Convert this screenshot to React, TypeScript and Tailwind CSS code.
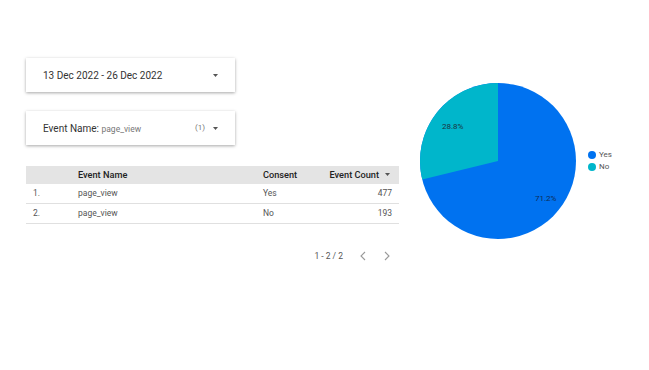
import React from "react";

const Caret = () => (
  <svg width="5" height="3" viewBox="0 0 5 3" className="inline-block">
    <path d="M0 0 L5 0 L2.5 3 Z" fill="#555" />
  </svg>
);

const Chevron = ({ dir }: { dir: "l" | "r" }) => (
  <svg width="6" height="10" viewBox="0 0 6 10">
    <path d={dir === "l" ? "M5 1 L1 5 L5 9" : "M1 1 L5 5 L1 9"} stroke="#9a9a9a" strokeWidth="1.1" fill="none" />
  </svg>
);

function Pie() {
  const cx = 80, cy = 80, r = 78;
  const a = 0.288 * 2 * Math.PI;
  const x = cx - r * Math.sin(a);
  const y = cy - r * Math.cos(a);
  return (
    <svg width="160" height="160" viewBox="0 0 160 160">
      <circle cx={cx} cy={cy} r={r} fill="#0072f0" />
      <path d={`M${cx} ${cy} L${cx} ${cy - r} A${r} ${r} 0 0 0 ${x} ${y} Z`} fill="#00b6cb" />
      <text x="24" y="48" fontSize="8" fill="#1b3340" fontFamily="Roboto">28.8%</text>
      <text x="117" y="120" fontSize="8" fill="#0d2b55" fontFamily="Roboto">71.2%</text>
    </svg>
  );
}

export default function App() {
  return (
    <div className="w-[649px] h-[370px] bg-white flex" style={{ fontFamily: "Roboto, 'Liberation Sans', sans-serif" }}>
      <div className="pl-[26px] pt-[58px] w-[400px] flex flex-col">
        <div className="w-[209px] h-[34px] bg-white shadow-[0_1px_3px_rgba(0,0,0,0.35)] flex items-center pl-[17px] pr-[17px] text-[10px] text-[#333]">
          <span className="flex-1">13 Dec 2022 - 26 Dec 2022</span>
          <Caret />
        </div>
        <div className="mt-[19px] w-[209px] h-[34px] bg-white shadow-[0_1px_3px_rgba(0,0,0,0.35)] flex items-center pl-[17px] pr-[17px] text-[10px] text-[#333]">
          <span className="flex-1">
            Event Name: <span className="text-[8.5px] text-[#777]">page_view</span>
          </span>
          <span className="text-[8px] text-[#777] mr-[8px]">(1)</span>
          <Caret />
        </div>
        <div className="mt-[21px] w-[373px] text-[8.5px]">
          <div className="h-[18px] bg-[#e4e4e4] flex items-center font-medium text-[#222] text-[9.2px]">
            <span className="w-[52px]" />
            <span className="w-[185px]">Event Name</span>
            <span className="w-[64px]">Consent</span>
            <span className="flex-1 flex items-center justify-end pr-[9px] gap-[6px]">Event Count <Caret /></span>
          </div>
          {[["1.", "page_view", "Yes", "477"], ["2.", "page_view", "No", "193"]].map((r) => (
            <div key={r[0]} className="h-[20px] border-b border-[#e0e0e0] flex items-center text-[#555]">
              <span className="w-[52px] pl-[7px]">{r[0]}</span>
              <span className="w-[185px]">{r[1]}</span>
              <span className="w-[64px]">{r[2]}</span>
              <span className="flex-1 text-right pr-[7px]">{r[3]}</span>
            </div>
          ))}
          <div className="mt-[26px] flex items-center justify-end text-[8.5px] text-[#555] pr-[9px]">
            <span>1 - 2 / 2</span>
            <span className="ml-[17px]"><Chevron dir="l" /></span>
            <span className="ml-[18px]"><Chevron dir="r" /></span>
          </div>
        </div>
      </div>
      <div className="pl-[18px] pt-[81px] flex items-start">
        <Pie />
        <div className="ml-[10px] mt-[68px] flex flex-col text-[8px] leading-[12px] text-[#555]">
          <div className="flex items-center gap-[3px]"><span className="w-[8px] h-[8px] rounded-full bg-[#0072f0]" />Yes</div>
          <div className="flex items-center gap-[3px]"><span className="w-[8px] h-[8px] rounded-full bg-[#00b6cb]" />No</div>
        </div>
      </div>
    </div>
  );
}
